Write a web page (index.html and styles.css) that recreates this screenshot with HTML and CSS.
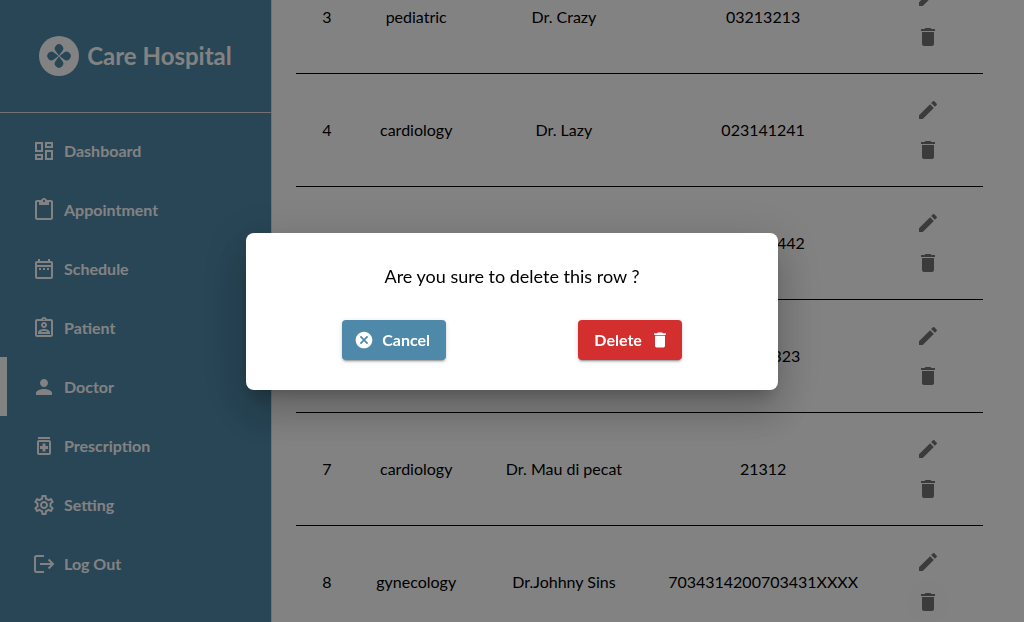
FILE: index.html
```html
<!DOCTYPE html>
<html lang="en">
<head>
<meta charset="utf-8">
<meta name="viewport" content="width=device-width, initial-scale=1">
<title>Care Hospital</title>
<link rel="stylesheet" href="styles.css">
</head>
<body>
<svg class="sprite" aria-hidden="true">
  <symbol id="edit" viewBox="0 0 24 24"><path d="M3 17.25V21h3.75L17.81 9.94l-3.75-3.75L3 17.25zM20.71 7.04c.39-.39.39-1.02 0-1.41l-2.34-2.34a.9959.9959 0 0 0-1.41 0l-1.83 1.83 3.75 3.75 1.83-1.83z"/></symbol>
  <symbol id="trash" viewBox="0 0 24 24"><path d="M6 19c0 1.1.9 2 2 2h8c1.1 0 2-.9 2-2V7H6v12zM19 4h-3.5l-1-1h-5l-1 1H5v2h14V4z"/></symbol>
</svg>
<div class="app">
  <aside class="sidebar">
    <header class="brand">
      <svg class="brand-logo" viewBox="0 0 40 40" aria-hidden="true">
        <circle cx="20" cy="20" r="20" fill="#fff"/>
        <g fill="#4f89a9">
          <path id="petal" d="M20 19.500L16.800 15.200A4.200 4.200 0 1 1 23.200 15.200Z"/>
          <use href="#petal" transform="rotate(90 20 20)"/>
          <use href="#petal" transform="rotate(180 20 20)"/>
          <use href="#petal" transform="rotate(270 20 20)"/>
        </g>
      </svg>
      <span class="brand-name">Care Hospital</span>
    </header>
    <nav class="menu">
      <a class="menu-item" href="#dashboard"><svg class="icon" viewBox="0 0 24 24"><path d="M19 5v2h-4V5h4M9 5v6H5V5h4m10 8v6h-4v-6h4M9 17v2H5v-2h4M21 3h-8v6h8V3zM11 3H3v10h8V3zm10 8h-8v10h8V11zm-10 4H3v6h8v-6z"/></svg>Dashboard</a>
      <a class="menu-item" href="#appointment"><svg class="icon" viewBox="0 0 24 24"><path d="M19 2h-4.180C14.400.84 13.300 0 12 0S9.600.84 9.180 2H5c-1.100 0-2 .9-2 2v16c0 1.100.9 2 2 2h14c1.100 0 2-.9 2-2V4c0-1.100-.9-2-2-2zm-7 0c.55 0 1 .45 1 1s-.45 1-1 1-1-.45-1-1 .45-1 1-1zm7 18H5V4h2v3h10V4h2v16z"/></svg>Appointment</a>
      <a class="menu-item" href="#schedule"><svg class="icon" viewBox="0 0 24 24"><path d="M7 11h2v2H7v-2zm14-5v14c0 1.100-.9 2-2 2H5c-1.110 0-2-.9-2-2l.01-14c0-1.100.88-2 1.990-2h1V2h2v2h8V2h2v2h1c1.100 0 2 .9 2 2zM5 8h14V6H5v2zm14 12V10H5v10h14zm-4-7h2v-2h-2v2zm-4 0h2v-2h-2v2z"/></svg>Schedule</a>
      <a class="menu-item" href="#patient"><svg class="icon" viewBox="0 0 24 24"><path d="M19 3h-4.180C14.400 1.840 13.300 1 12 1s-2.400.84-2.820 2H5c-1.100 0-2 .9-2 2v14c0 1.100.9 2 2 2h14c1.100 0 2-.9 2-2V5c0-1.100-.9-2-2-2zm-7-.25c.41 0 .75.34.75.75s-.34.75-.75.75-.75-.34-.75-.75.34-.75.75-.75zM19 19H5V5h14v14zM12 6c-1.650 0-3 1.350-3 3s1.350 3 3 3 3-1.350 3-3-1.350-3-3-3zm0 4c-.55 0-1-.45-1-1s.45-1 1-1 1 .45 1 1-.45 1-1 1zm-6 6.470V18h12v-1.530c0-2.500-3.970-3.580-6-3.580s-6 1.070-6 3.580zm2.310-.47c.69-.56 2.380-1.120 3.690-1.120s3.010.56 3.690 1.120H8.310z"/></svg>Patient</a>
      <a class="menu-item menu-item-active" href="#doctor" aria-current="page"><svg class="icon" viewBox="0 0 24 24"><path d="M12 12c2.210 0 4-1.790 4-4s-1.790-4-4-4-4 1.790-4 4 1.790 4 4 4zm0 2c-2.670 0-8 1.340-8 4v2h16v-2c0-2.660-5.330-4-8-4z"/></svg>Doctor</a>
      <a class="menu-item" href="#prescription"><svg class="icon" viewBox="0 0 24 24"><path d="M6 3h12v2H6zM17 6H7c-1.100 0-2 .9-2 2v11c0 1.100.9 2 2 2h10c1.100 0 2-.9 2-2V8c0-1.100-.9-2-2-2zm0 13H7V8h10v11zm-6.500-1.500h3V15H16v-3h-2.500V9.500h-3V12H8v3h2.500z"/></svg>Prescription</a>
      <a class="menu-item" href="#setting"><svg class="icon" viewBox="0 0 24 24"><path d="M19.430 12.980c.04-.32.07-.64.07-.98 0-.34-.03-.66-.07-.98l2.110-1.650c.19-.15.24-.42.12-.64l-2-3.460c-.09-.16-.26-.25-.44-.25-.06 0-.12.010-.17.030l-2.490 1c-.52-.4-1.080-.73-1.690-.98l-.38-2.650C14.460 2.180 14.250 2 14 2h-4c-.25 0-.46.180-.49.420l-.38 2.650c-.61.250-1.170.590-1.690.980l-2.490-1c-.06-.020-.12-.030-.18-.030-.17 0-.34.090-.43.250l-2 3.460c-.13.220-.07.490.12.640l2.110 1.650c-.04.320-.07.650-.07.980s.030.660.070.980l-2.110 1.650c-.19.150-.24.420-.12.640l2 3.460c.09.160.26.250.44.250.06 0 .12-.010.17-.030l2.490-1c.52.400 1.080.730 1.690.980l.38 2.650c.03.240.24.420.49.420h4c.25 0 .46-.180.49-.420l.38-2.650c.61-.250 1.170-.590 1.690-.980l2.490 1c.06.020.12.030.18.030.17 0 .34-.090.43-.250l2-3.460c.12-.220.070-.490-.12-.640l-2.110-1.650zm-1.980-1.710c.04.310.05.520.05.730 0 .210-.020.430-.050.730l-.14 1.130.89.700 1.080.84-.7 1.210-1.270-.51-1.040-.42-.9.680c-.43.320-.84.560-1.250.73l-1.060.43-.16 1.130-.2 1.350h-1.400l-.19-1.350-.16-1.130-1.060-.43c-.43-.180-.83-.410-1.230-.71l-.91-.7-1.060.43-1.270.51-.7-1.210 1.080-.84.890-.7-.14-1.130c-.03-.310-.05-.540-.05-.740s.020-.430.050-.730l.14-1.130-.89-.7-1.080-.84.7-1.210 1.270.51 1.040.42.9-.68c.43-.320.84-.560 1.250-.73l1.060-.43.16-1.130.2-1.350h1.390l.19 1.350.16 1.130 1.060.43c.43.180.83.410 1.230.71l.91.7 1.060-.43 1.270-.51.7 1.210-1.070.85-.89.7.14 1.130zM12 8c-2.210 0-4 1.790-4 4s1.790 4 4 4 4-1.790 4-4-1.790-4-4-4zm0 6c-1.100 0-2-.9-2-2s.9-2 2-2 2 .9 2 2-.9 2-2 2z"/></svg>Setting</a>
      <a class="menu-item" href="#logout"><svg class="icon icon-line" viewBox="0 0 24 24"><path d="M12 4H4.500Q3 4 3 5.500v13Q3 20 4.500 20H12M8 12h13M16.500 7.500L21 12l-4.500 4.500"/></svg>Log Out</a>
    </nav>
  </aside>
  <main class="content">
    <table class="doctors">
      <colgroup><col class="col-no"><col class="col-dept"><col class="col-name"><col class="col-phone"><col class="col-actions"></colgroup>
      <tbody>
        <tr><td>3</td><td>pediatric</td><td>Dr. Crazy</td><td>03213213</td><td><div class="actions"><button class="icon-button" aria-label="Edit"><svg class="icon"><use href="#edit"/></svg></button><button class="icon-button" aria-label="Delete"><svg class="icon"><use href="#trash"/></svg></button></div></td></tr>
        <tr><td>4</td><td>cardiology</td><td>Dr. Lazy</td><td>023141241</td><td><div class="actions"><button class="icon-button" aria-label="Edit"><svg class="icon"><use href="#edit"/></svg></button><button class="icon-button" aria-label="Delete"><svg class="icon"><use href="#trash"/></svg></button></div></td></tr>
        <tr><td></td><td></td><td></td><td>023141442</td><td><div class="actions"><button class="icon-button" aria-label="Edit"><svg class="icon"><use href="#edit"/></svg></button><button class="icon-button" aria-label="Delete"><svg class="icon"><use href="#trash"/></svg></button></div></td></tr>
        <tr><td></td><td></td><td></td><td>02131323</td><td><div class="actions"><button class="icon-button" aria-label="Edit"><svg class="icon"><use href="#edit"/></svg></button><button class="icon-button" aria-label="Delete"><svg class="icon"><use href="#trash"/></svg></button></div></td></tr>
        <tr><td>7</td><td>cardiology</td><td>Dr. Mau di pecat</td><td>21312</td><td><div class="actions"><button class="icon-button" aria-label="Edit"><svg class="icon"><use href="#edit"/></svg></button><button class="icon-button" aria-label="Delete"><svg class="icon"><use href="#trash"/></svg></button></div></td></tr>
        <tr><td>8</td><td>gynecology</td><td>Dr.Johhny Sins</td><td>7034314200703431XXXX</td><td><div class="actions"><button class="icon-button" aria-label="Edit"><svg class="icon"><use href="#edit"/></svg></button><button class="icon-button icon-button-hover" aria-label="Delete"><svg class="icon"><use href="#trash"/></svg></button></div></td></tr>
      </tbody>
    </table>
  </main>
</div>
<div class="backdrop">
  <div class="dialog" role="dialog" aria-modal="true" aria-labelledby="dialog-title">
    <p class="dialog-title" id="dialog-title">Are you sure to delete this row ?</p>
    <div class="dialog-actions">
      <button class="button button-cancel"><svg class="button-icon" viewBox="0 0 24 24"><path d="M12 2C6.470 2 2 6.470 2 12s4.470 10 10 10 10-4.470 10-10S17.530 2 12 2zm5 13.590L15.590 17 12 13.410 8.410 17 7 15.590 10.590 12 7 8.410 8.410 7 12 10.590 15.590 7 17 8.410 13.410 12 17 15.590z"/></svg>Cancel</button>
      <button class="button button-delete">Delete<svg class="button-icon"><use href="#trash"/></svg></button>
    </div>
  </div>
</div>
</body>
</html>
```
FILE: styles.css
```css
* { box-sizing: border-box; }
body {
  margin: 0;
  color: #000;
  font: 16px/24px Lato, "Liberation Sans", sans-serif;
}
button { font: inherit; border: 0; cursor: pointer; }
.sprite { display: none; }
.icon { width: 24px; height: 24px; fill: currentColor; flex: none; }
.icon-line { fill: none; stroke: currentColor; stroke-width: 2; }

.app { display: flex; height: 100vh; overflow: hidden; }
.sidebar {
  flex: none;
  width: 272px;
  background: #4f89a9;
  border-right: 1px solid #e0e0e0;
  color: #fff;
  font-weight: 700;
}
.brand {
  display: flex;
  align-items: center;
  justify-content: center;
  gap: 8px;
  padding: 36px 16px;
  border-bottom: 1px solid #e0e0e0;
}
.brand-logo { width: 40px; height: 40px; flex: none; }
.brand-name { font-size: 24px; line-height: 40px; }
.menu { padding-top: 8px; }
.menu-item {
  display: flex;
  align-items: center;
  gap: 8px;
  height: 59px;
  padding-left: 25px;
  border-left: 7px solid transparent;
  color: inherit;
  text-decoration: none;
}
.menu-item-active { border-left-color: #fff; }

.content { flex: 1; padding: 0 41px 0 24px; }
/* The list is scrolled part-way down its first visible row. */
.doctors {
  width: 100%;
  margin-top: -39px;
  table-layout: fixed;
  border-collapse: separate;
  border-spacing: 0;
  text-align: center;
}
.doctors td { padding: 16px 0; border-bottom: 1px solid #000; }
.col-no { width: 9%; }
.col-dept { width: 17%; }
.col-name { width: 26%; }
.col-phone { width: 32%; }
.col-actions { width: 16%; }
.actions { display: flex; flex-direction: column; align-items: center; }
.icon-button {
  display: flex;
  padding: 8px;
  border-radius: 50%;
  background: transparent;
  color: #757575;
}
.icon-button-hover { background: #fefefe; }

.backdrop {
  position: fixed;
  inset: 0;
  display: flex;
  align-items: center;
  justify-content: center;
  background: rgba(0, 0, 0, 0.49);
}
.dialog {
  width: 532px;
  max-width: 90%;
  padding: 30px;
  border-radius: 8px;
  background: #fff;
  color: #000;
  box-shadow: 0 11px 15px -7px rgba(0, 0, 0, 0.2), 0 24px 38px 3px rgba(0, 0, 0, 0.14), 0 9px 46px 8px rgba(0, 0, 0, 0.12);
}
.dialog-title { margin: 0 0 30px; font-size: 18px; line-height: 27px; text-align: center; }
.dialog-actions { display: flex; justify-content: space-around; }
.button {
  display: flex;
  align-items: center;
  gap: 8px;
  height: 40px;
  border-radius: 4px;
  color: #fff;
  font-weight: 700;
  box-shadow: 0 3px 1px -2px rgba(0, 0, 0, 0.2), 0 2px 2px 0 rgba(0, 0, 0, 0.14), 0 1px 5px 0 rgba(0, 0, 0, 0.12);
}
.button-icon { width: 20px; height: 20px; fill: currentColor; }
.button-cancel { padding: 0 16px 0 12px; background: #4f89a9; }
.button-delete { padding: 0 12px 0 16px; background: #d32f2f; }
```
